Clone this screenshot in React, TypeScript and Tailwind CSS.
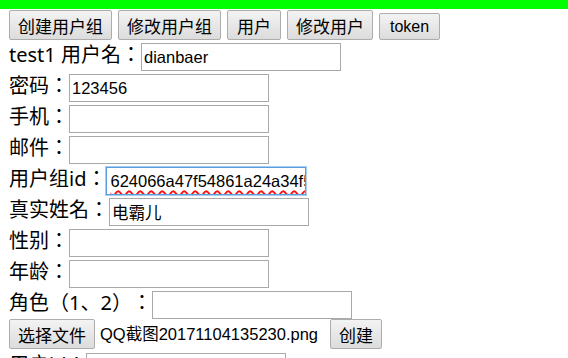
import React from "react";

const FONT = { fontFamily: '"Noto Sans", "Noto Sans CJK JP", sans-serif' };
const INPUT_FONT = { fontFamily: '"Liberation Sans", "Noto Sans CJK SC", sans-serif' };

function Btn({ children, className = "" }: { children: React.ReactNode; className?: string }) {
  return (
    <button
      className={
        "flex items-center justify-center border border-[#adadad] rounded-[2px] bg-linear-to-b from-[#f3f3f3] to-[#dcdcdc] text-black leading-none " +
        className
      }
      style={{ fontFamily: '"Noto Sans CJK SC", sans-serif' }}
    >
      {children}
    </button>
  );
}

function Field({
  label,
  value = "",
  focused = false,
}: {
  label: React.ReactNode;
  value?: string;
  focused?: boolean;
}) {
  return (
    <div className="flex items-center h-[28px]">
      <span className="text-[20px] leading-none text-black whitespace-pre pb-[5px] [text-spacing-trim:space-all]">
        {label}
      </span>
      {focused ? (
        <div
          className="w-[200px] h-[28px] pl-[3px] pr-[1px] flex items-center overflow-hidden whitespace-nowrap text-[16.5px] text-black bg-white border border-[#5b9ee0] ring-1 ring-[#a9cdf0]"
          style={INPUT_FONT}
        >
          <span className="underline decoration-wavy decoration-[#ff1010] decoration-[1.5px] underline-offset-[3px]">
            {value}
          </span>
        </div>
      ) : (
        <input
          readOnly
          value={value}
          className="w-[200px] h-[28px] px-[2px] text-[16.5px] text-black bg-white outline-none border border-[#a9a9a9]"
          style={INPUT_FONT}
        />
      )}
    </div>
  );
}

export default function App() {
  return (
    <div className="w-[568px] h-[358px] overflow-hidden bg-white" style={FONT}>
      <div className="h-[9px] bg-[#00ff00]" />
      <div className="flex items-end gap-[6px] px-[9px] pt-[1px]">
        <Btn className="h-[30px] px-[8px] text-[17px]">创建用户组</Btn>
        <Btn className="h-[30px] px-[8px] text-[17px]">修改用户组</Btn>
        <Btn className="h-[30px] px-[9px] text-[17px]">用户</Btn>
        <Btn className="h-[30px] px-[8px] text-[17px]">修改用户</Btn>
        <Btn className="h-[27px] px-[10px] text-[16px]">
          <span style={{ fontFamily: '"Liberation Sans", sans-serif' }}>token</span>
        </Btn>
      </div>
      <div className="flex flex-col gap-[3px] px-[9px] mt-[3px]">
        <Field label="test1 用户名：" value="dianbaer" />
        <Field label="密码：" value="123456" />
        <Field label="手机：" />
        <Field label="邮件：" />
        <Field label="用户组id：" value="624066a47f54861a24a34f5b8e21" focused />
        <Field label="真实姓名：" value="电霸儿" />
        <Field label="性别：" />
        <Field label="年龄：" />
        <Field label="角色（1、2）：" />
      </div>
      <div className="flex items-center px-[9px] h-[30px]">
        <Btn className="h-[30px] px-[8px] text-[17px]">选择文件</Btn>
        <span className="ml-[5px] text-[16.5px] text-black leading-none" style={INPUT_FONT}>
          QQ截图20171104135230.png
        </span>
        <Btn className="ml-[12px] h-[30px] px-[8px] text-[17px]">创建</Btn>
      </div>
      <div className="px-[9px] mt-[4px]">
        <Field label="用户id：" />
      </div>
    </div>
  );
}
